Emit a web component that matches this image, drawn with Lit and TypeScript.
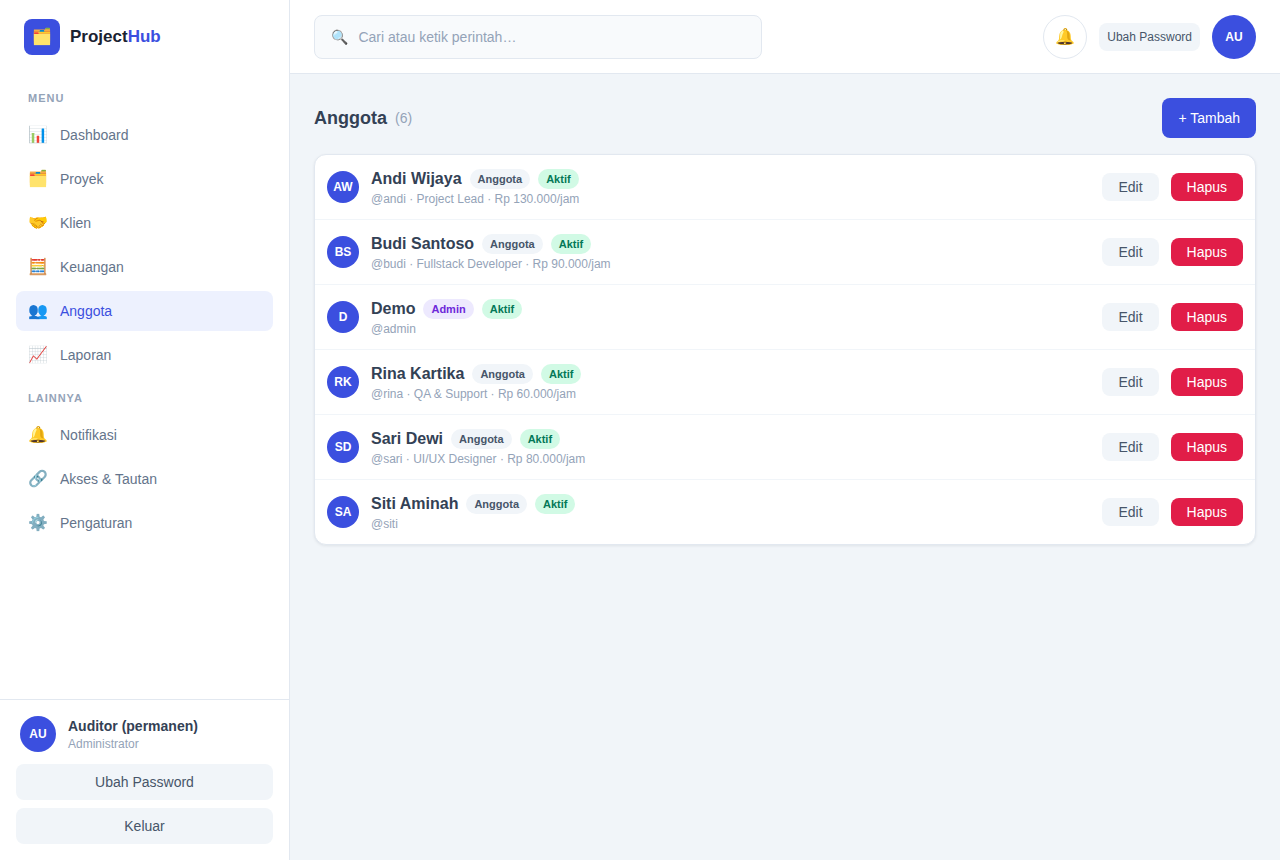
import { LitElement, html, css } from "lit";
import { customElement, property } from "lit/decorators.js";
import { classMap } from "lit/directives/class-map.js";

interface NavItem {
  icon: string;
  label: string;
  active?: boolean;
}

interface Member {
  initials: string;
  name: string;
  role: "Anggota" | "Admin";
  detail: string;
}

const MENU: NavItem[] = [
  { icon: "📊", label: "Dashboard" },
  { icon: "🗂️", label: "Proyek" },
  { icon: "🤝", label: "Klien" },
  { icon: "🧮", label: "Keuangan" },
  { icon: "👥", label: "Anggota", active: true },
  { icon: "📈", label: "Laporan" },
];

const OTHER: NavItem[] = [
  { icon: "🔔", label: "Notifikasi" },
  { icon: "🔗", label: "Akses & Tautan" },
  { icon: "⚙️", label: "Pengaturan" },
];

const MEMBERS: Member[] = [
  { initials: "AW", name: "Andi Wijaya", role: "Anggota", detail: "@andi · Project Lead · Rp 130.000/jam" },
  { initials: "BS", name: "Budi Santoso", role: "Anggota", detail: "@budi · Fullstack Developer · Rp 90.000/jam" },
  { initials: "D", name: "Demo", role: "Admin", detail: "@admin" },
  { initials: "RK", name: "Rina Kartika", role: "Anggota", detail: "@rina · QA & Support · Rp 60.000/jam" },
  { initials: "SD", name: "Sari Dewi", role: "Anggota", detail: "@sari · UI/UX Designer · Rp 80.000/jam" },
  { initials: "SA", name: "Siti Aminah", role: "Anggota", detail: "@siti" },
];

const shared = css`
  :host {
    display: block;
    box-sizing: border-box;
    font-family: "Liberation Sans", Arial, "Noto Color Emoji", sans-serif;
    font-size: 14px;
    line-height: 20px;
    color: #334155;
  }
  *,
  *::before,
  *::after {
    box-sizing: border-box;
  }
  .btn {
    display: inline-flex;
    align-items: center;
    justify-content: center;
    height: 28px;
    padding: 0 16px;
    border: 0;
    border-radius: 8px;
    background: #f1f5f9;
    color: #475569;
    font: inherit;
    white-space: nowrap;
    cursor: pointer;
  }
  .btn.primary {
    height: 40px;
    background: #3b4fdf;
    color: #fff;
  }
  .btn.danger {
    background: #e11d48;
    color: #fff;
  }
  .btn.small {
    padding: 0 8px;
    font-size: 12px;
    line-height: 16px;
  }
  .btn.wide {
    width: 100%;
    height: 36px;
  }
  .avatar {
    display: flex;
    flex: none;
    align-items: center;
    justify-content: center;
    width: 32px;
    height: 32px;
    padding: 0;
    border: 0;
    border-radius: 50%;
    background: #3b4fdf;
    color: #fff;
    font-family: inherit;
    font-size: 12px;
    line-height: 16px;
    font-weight: 700;
  }
  .avatar.medium {
    width: 36px;
    height: 36px;
  }
  .avatar.large {
    width: 44px;
    height: 44px;
    cursor: pointer;
  }
`;

@customElement("app-sidebar")
export class AppSidebar extends LitElement {
  static styles = [
    shared,
    css`
      :host {
        display: flex;
        flex-direction: column;
        background: #fff;
        border-right: 1px solid #e2e8f0;
      }
      .brand {
        display: flex;
        align-items: center;
        gap: 10px;
        padding: 19px 24px;
        color: #1a2231;
        font-size: 17px;
        line-height: 24px;
        font-weight: 700;
        text-decoration: none;
      }
      .mark {
        display: flex;
        align-items: center;
        justify-content: center;
        width: 36px;
        height: 36px;
        border-radius: 8px;
        background: #3b4fdf;
        font-size: 16px;
        font-weight: 400;
      }
      .accent {
        color: #3b4fdf;
      }
      .nav {
        display: flex;
        flex: 1;
        flex-direction: column;
        gap: 15px;
        padding: 16px;
      }
      .heading {
        margin: 0 0 8px;
        padding: 0 12px;
        color: #94a3b8;
        font-size: 11px;
        line-height: 17px;
        font-weight: 700;
        letter-spacing: 1px;
        text-transform: uppercase;
      }
      .list {
        display: flex;
        flex-direction: column;
        gap: 4px;
        margin: 0;
        padding: 0;
        list-style: none;
      }
      .item {
        display: flex;
        align-items: center;
        gap: 12px;
        height: 40px;
        padding: 0 12px;
        border-radius: 8px;
        color: #64748b;
        text-decoration: none;
      }
      .item.active {
        background: #edf1fe;
        color: #3b4fdf;
      }
      .icon {
        width: 20px;
        font-size: 16px;
        text-align: center;
      }
      .footer {
        display: flex;
        flex-direction: column;
        gap: 8px;
        padding: 16px;
        border-top: 1px solid #e2e8f0;
      }
      .user {
        display: flex;
        align-items: center;
        gap: 12px;
        padding: 0 4px 4px;
      }
      .name {
        font-weight: 700;
      }
      .role {
        color: #94a3b8;
        font-size: 12px;
        line-height: 16px;
      }
    `,
  ];

  private group(title: string, items: NavItem[]) {
    return html`<section>
      <h2 class="heading">${title}</h2>
      <ul class="list">
        ${items.map(
          (i) => html`<li>
            <a class=${classMap({ item: true, active: !!i.active })} href="#">
              <span class="icon" aria-hidden="true">${i.icon}</span><span>${i.label}</span>
            </a>
          </li>`
        )}
      </ul>
    </section>`;
  }

  render() {
    return html`
      <a class="brand" href="#">
        <span class="mark" aria-hidden="true">🗂️</span>
        <span>Project<span class="accent">Hub</span></span>
      </a>
      <nav class="nav">${this.group("Menu", MENU)} ${this.group("Lainnya", OTHER)}</nav>
      <div class="footer">
        <div class="user">
          <span class="avatar medium">AU</span>
          <div>
            <div class="name">Auditor (permanen)</div>
            <div class="role">Administrator</div>
          </div>
        </div>
        <button class="btn wide" type="button">Ubah Password</button>
        <button class="btn wide" type="button">Keluar</button>
      </div>
    `;
  }
}

@customElement("app-topbar")
export class AppTopbar extends LitElement {
  static styles = [
    shared,
    css`
      :host {
        display: flex;
        align-items: center;
        justify-content: space-between;
        gap: 24px;
        height: 74px;
        padding: 0 24px;
        background: #fff;
        border-bottom: 1px solid #e2e8f0;
      }
      .search {
        display: flex;
        flex: 1;
        align-items: center;
        gap: 10px;
        max-width: 448px;
        height: 44px;
        padding: 0 16px;
        border: 1px solid #e2e8f0;
        border-radius: 8px;
        background: #f8fafc;
      }
      .glass {
        font-size: 14px;
      }
      .input {
        flex: 1;
        min-width: 0;
        padding: 0;
        border: 0;
        outline: 0;
        background: transparent;
        color: #334155;
        font: inherit;
      }
      .input::placeholder {
        color: #94a3b8;
        opacity: 1;
      }
      .actions {
        display: flex;
        align-items: center;
        gap: 12px;
      }
      .bell {
        display: flex;
        align-items: center;
        justify-content: center;
        width: 44px;
        height: 44px;
        padding: 0;
        border: 1px solid #e2e8f0;
        border-radius: 50%;
        background: #fff;
        font-family: inherit;
        font-size: 16px;
        line-height: 24px;
        cursor: pointer;
      }
    `,
  ];

  render() {
    return html`
      <label class="search">
        <span class="glass" aria-hidden="true">🔍</span>
        <input class="input" type="text" aria-label="Cari" placeholder="Cari atau ketik perintah…" />
      </label>
      <div class="actions">
        <button class="bell" type="button" aria-label="Notifikasi">🔔</button>
        <button class="btn small" type="button">Ubah Password</button>
        <button class="avatar large" type="button">AU</button>
      </div>
    `;
  }
}

@customElement("member-row")
export class MemberRow extends LitElement {
  @property({ attribute: false }) member!: Member;

  static styles = [
    shared,
    css`
      :host {
        display: flex;
        align-items: center;
        gap: 12px;
        padding: 12px;
      }
      .info {
        flex: 1;
        min-width: 0;
      }
      .title {
        display: flex;
        align-items: center;
        gap: 8px;
      }
      .name {
        font-size: 16px;
        line-height: 24px;
        font-weight: 700;
      }
      .badge {
        padding: 2px 8px;
        border-radius: 10px;
        background: #f1f5f9;
        color: #475569;
        font-size: 11px;
        line-height: 16px;
        font-weight: 700;
      }
      .badge.admin {
        background: #ede9fe;
        color: #6d28d9;
      }
      .badge.on {
        background: #d1fae5;
        color: #047857;
      }
      .detail {
        color: #94a3b8;
        font-size: 12px;
        line-height: 16px;
      }
    `,
  ];

  render() {
    const m = this.member;
    return html`
      <span class="avatar">${m.initials}</span>
      <div class="info">
        <div class="title">
          <span class="name">${m.name}</span>
          <span class=${classMap({ badge: true, admin: m.role === "Admin" })}>${m.role}</span>
          <span class="badge on">Aktif</span>
        </div>
        <div class="detail">${m.detail}</div>
      </div>
      <button class="btn" type="button">Edit</button>
      <button class="btn danger" type="button">Hapus</button>
    `;
  }
}

@customElement("app-root")
export class AppRoot extends LitElement {
  static styles = [
    shared,
    css`
      :host {
        display: grid;
        grid-template-columns: 290px minmax(0, 1fr);
        min-height: 100vh;
        background: #f1f5f9;
      }
      .content {
        padding: 24px;
      }
      .head {
        display: flex;
        align-items: center;
        justify-content: space-between;
        margin-bottom: 16px;
      }
      .heading {
        display: flex;
        align-items: center;
        gap: 8px;
      }
      .title {
        margin: 0;
        font-size: 18px;
        line-height: 28px;
        font-weight: 700;
      }
      .count {
        color: #94a3b8;
      }
      .card {
        margin: 0;
        padding: 0;
        list-style: none;
        border: 1px solid #e2e8f0;
        border-radius: 12px;
        background: #fff;
        box-shadow: 0 1px 3px rgba(15, 23, 42, 0.08);
      }
      .row + .row {
        border-top: 1px solid #f1f5f9;
      }
    `,
  ];

  render() {
    return html`
      <app-sidebar></app-sidebar>
      <div>
        <app-topbar></app-topbar>
        <main class="content">
          <div class="head">
            <div class="heading">
              <h1 class="title">Anggota</h1>
              <span class="count">(${MEMBERS.length})</span>
            </div>
            <button class="btn primary" type="button">+ Tambah</button>
          </div>
          <ul class="card">
            ${MEMBERS.map((m) => html`<li class="row"><member-row .member=${m}></member-row></li>`)}
          </ul>
        </main>
      </div>
    `;
  }
}
